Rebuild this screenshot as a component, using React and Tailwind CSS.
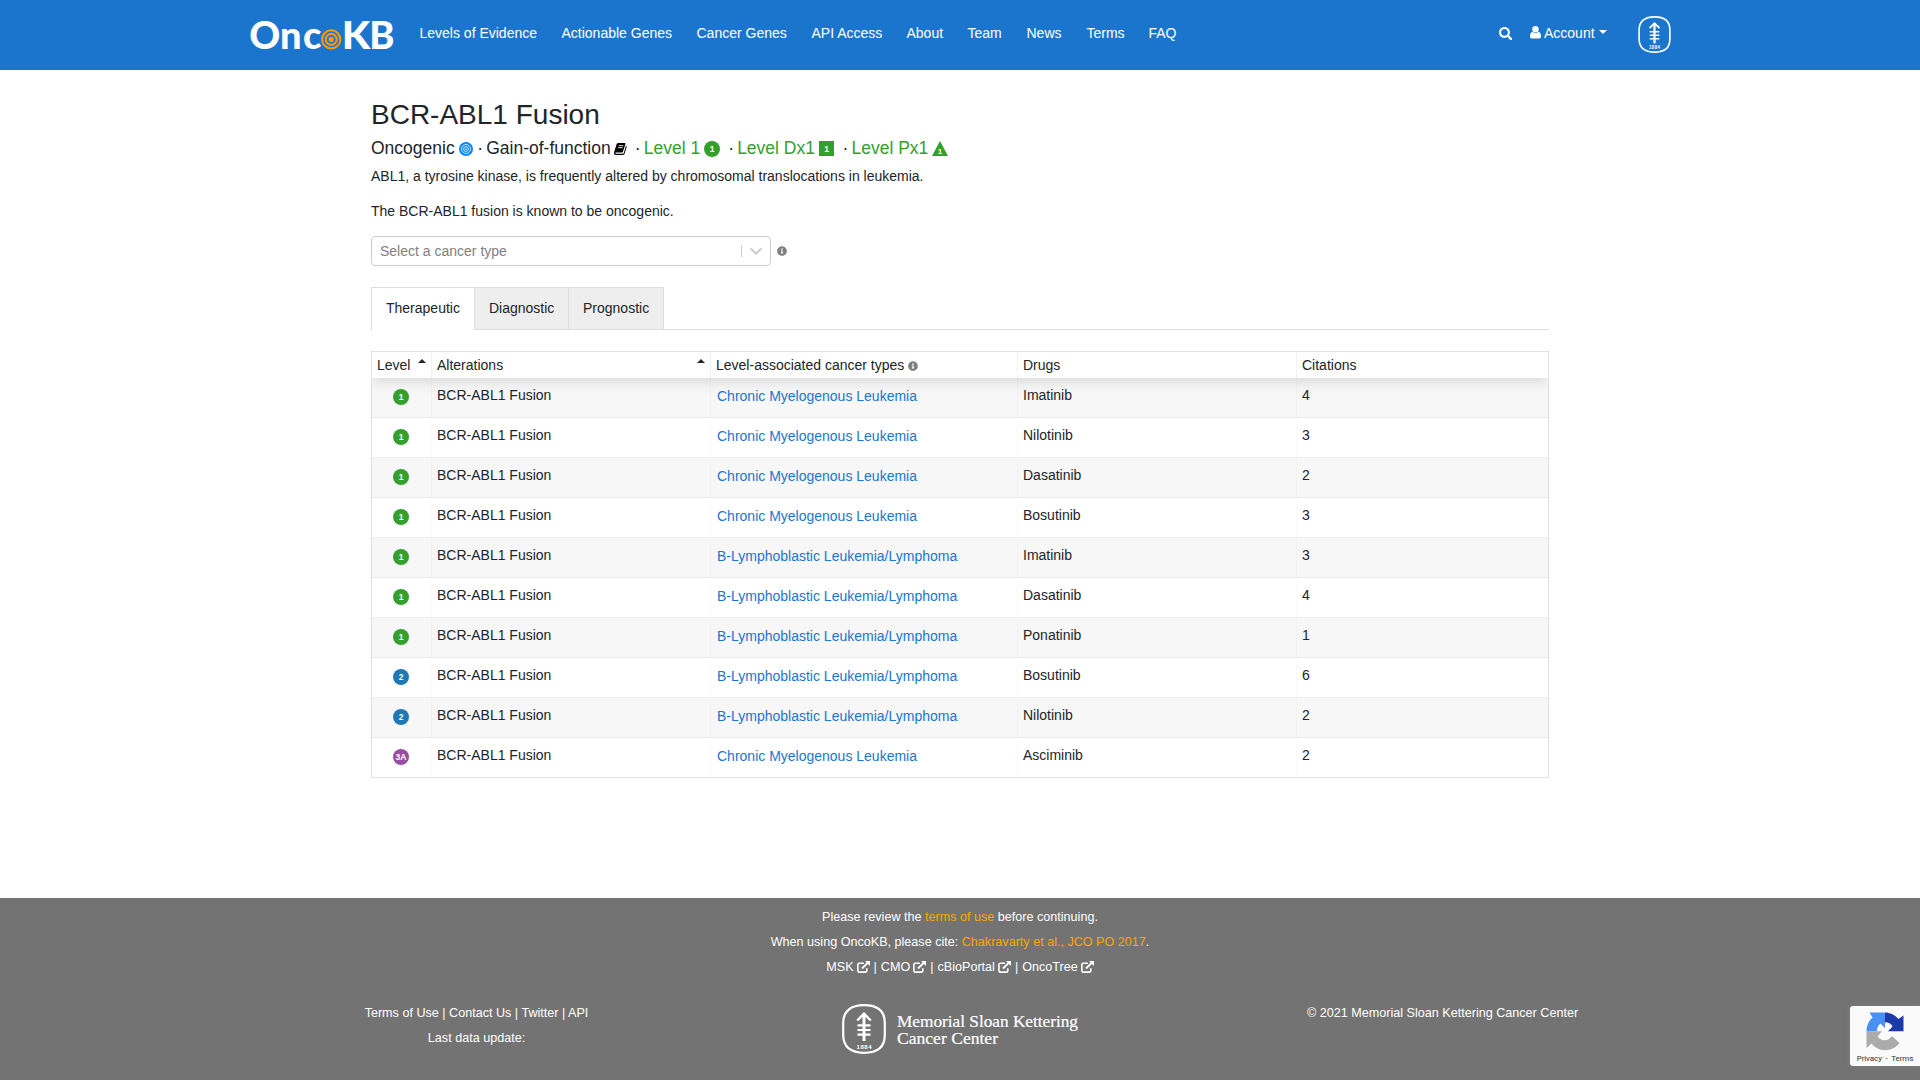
import React from "react";
import { FaInfoCircle, FaSearch } from "react-icons/fa";

const NAV = [
  ["Levels of Evidence", "w-[142px]"],
  ["Actionable Genes", "w-[135px]"],
  ["Cancer Genes", "w-[115px]"],
  ["API Access", "w-[95px]"],
  ["About", "w-[61px]"],
  ["Team", "w-[59px]"],
  ["News", "w-[60px]"],
  ["Terms", "w-[62px]"],
  ["FAQ", "w-[40px]"],
];

const CML = "Chronic Myelogenous Leukemia";
const BLL = "B-Lymphoblastic Leukemia/Lymphoma";

const ROWS = [
  ["1", CML, "Imatinib", 4],
  ["1", CML, "Nilotinib", 3],
  ["1", CML, "Dasatinib", 2],
  ["1", CML, "Bosutinib", 3],
  ["1", BLL, "Imatinib", 3],
  ["1", BLL, "Dasatinib", 4],
  ["1", BLL, "Ponatinib", 1],
  ["2", BLL, "Bosutinib", 6],
  ["2", BLL, "Nilotinib", 2],
  ["3A", CML, "Asciminib", 2],
];

const LEVEL_FILL = { 1: "#33a02c", 2: "#1f78b4", "3A": "#984ea3" };
const GRID = "grid grid-cols-[60px_279px_307px_279px_251px]";

function LevelBadge({ level, className = "" }) {
  return (
    <svg width="16" height="16" viewBox="0 0 16 16" className={"shrink-0 " + className}>
      <circle cx="8" cy="8" r="8" fill={LEVEL_FILL[level]} />
      <text x="8" y="11" textAnchor="middle" fontSize="8.5" fontWeight="700" fill="#fff">
        {level}
      </text>
    </svg>
  );
}

function OncoKbLogo() {
  return (
    <svg width="146" height="50" viewBox="0 0 146 50" fontFamily="Lato" fontWeight="900" fontSize="38" fill="#fff">
      <text x="0.2" y="38.5" textLength="31" lengthAdjust="spacingAndGlyphs">O</text>
      <text x="31" y="38.5">n</text>
      <text x="54" y="38.5">c</text>
      <text x="92.800" y="38.5" textLength="28.5" lengthAdjust="spacingAndGlyphs">K</text>
      <text x="120.200" y="38.5">B</text>
      <circle cx="82.2" cy="29.4" r="10" fill="#1c75cd" />
      <g fill="none" stroke="#ff9900" strokeWidth="2.1">
        <circle cx="82.2" cy="29.4" r="9.1" />
        <circle cx="82.2" cy="29.4" r="5.5" />
      </g>
      <circle cx="82.2" cy="29.4" r="2.6" fill="#ff9900" />
    </svg>
  );
}

function MskMark({ width, height }) {
  return (
    <svg width={width} height={height} viewBox="0 0 44 50" fill="none" stroke="#fff" className="shrink-0">
      <path
        d="M22 1.2C35 1.2 42.8 7 42.8 19V31C42.8 43 35 48.8 22 48.8S1.2 43 1.2 31V19C1.2 7 9 1.2 22 1.2Z"
        strokeWidth="2.2"
      />
      <path d="M22 9.5V37" strokeWidth="3" />
      <path d="M15.2 16.5L22 9.8L28.8 16.5" strokeWidth="2.4" />
      <path d="M15.5 21.3H28.5M15.5 26H28.5M15.5 30.7H28.5" strokeWidth="2.2" />
      <text x="22" y="44.5" textAnchor="middle" fontSize="6" fontWeight="700" fill="#fff" stroke="none" textLength="15">
        1884
      </text>
    </svg>
  );
}

function OncogenicIcon() {
  return (
    <svg width="14" height="14" viewBox="0 0 14 14" className="ml-[4px] mt-[2px]">
      <circle cx="7" cy="7" r="7" fill="#0a84ff" />
      <g fill="none" stroke="#fff" strokeWidth="0.8">
        <circle cx="7" cy="7" r="4.5" />
        <circle cx="7" cy="7" r="2.4" />
      </g>
      <circle cx="7" cy="7" r="0.8" fill="#fff" />
    </svg>
  );
}

function BookIcon() {
  return (
    <svg width="13" height="12" viewBox="0 0 13 12" className="ml-[3.5px] mt-[2px]">
      <path d="M4.200 0H10.700Q11.700 0 11.400 1L9 8.600Q8.700 9.500 7.800 9.500H2Q1.300 9.500 1.300 10.100T2 10.800H8.800Q9.500 10.800 9.800 10L12 2.600Q12.900 3 12.600 4L10.700 10.600Q10.300 12 9 12H1.600Q0 12 0 10.300Q0 9.500 .3 8.600L2.600 1.200Q3 0 4.200 0Z" fill="#000" />
      <path d="M4.800 2.700H9.300M4.200 4.700H8.700" stroke="#fff" strokeWidth="0.900" />
    </svg>
  );
}

function RecaptchaMark() {
  return (
    <svg width="38" height="39" viewBox="0 0 38 39">
      <path d="M19 .5V16L14.500 11.500C12 13.500 11 16 10.800 19.200H.5C.5 13.500 3 8.500 6.500 5.500L3.500 .5Z" fill="#4a90f2" />
      <path d="M19 .5C24.500 .5 29.500 3.500 32.500 7L37.500 3.500V19.200H22L26.500 14.500C25 11.500 22.500 10.300 19 10.300Z" fill="#1c3aa9" />
      <path d="M.5 19.200H16L11.500 24.500C15 29.500 22.500 29.500 26 24L33.500 31C26 40.500 12.500 40.500 5.500 31.500L.5 36Z" fill="#ababab" />
    </svg>
  );
}

function SortUp({ className }) {
  return (
    <svg width="8" height="4" viewBox="0 0 8 4" className={className}>
      <path d="M4 0L8 4H0Z" fill="#212529" />
    </svg>
  );
}

function Dot({ className = "w-[16.5px] pl-[7.5px]" }) {
  return <span className={"shrink-0 overflow-visible " + className}>·</span>;
}

function ExternalIcon() {
  return (
    <svg width="13" height="12" viewBox="0 0 13 12" className="ml-[3px] mr-[4px] mt-[-2px]" fill="none" stroke="#fff">
      <path d="M7 2.200H2.300Q.9 2.200 .9 3.600V9.700Q.9 11.100 2.300 11.100H8.400Q9.800 11.100 9.800 9.700V7.200" strokeWidth="1.600" />
      <path d="M5 7.500L11 1.600" strokeWidth="2" />
      <path d="M8 0H13V5Z" fill="#fff" stroke="none" />
    </svg>
  );
}

export default function App() {
  return (
    <div className="flex h-[1080px] w-[1920px] flex-col overflow-hidden bg-white text-[14px] leading-[20px] text-[#212529] [font-family:'Liberation_Sans',Arial,sans-serif]">
      <header className="flex h-[70px] shrink-0 items-center bg-[#1c75cd] pl-[249px] text-white">
        <OncoKbLogo />
        <nav className="mb-[5px] ml-[24.5px] flex">
          {NAV.map(([label, width]) => (
            <a key={label} className={"whitespace-nowrap " + width}>{label}</a>
          ))}
        </nav>
        <FaSearch className="mb-[3px] ml-[310px] text-[13.500px]" />
        <div className="mb-[5px] ml-[18px] flex items-center">
          <svg width="11" height="13" viewBox="0 0 11 13" fill="#fff">
            <circle cx="5.5" cy="3.300" r="3.200" />
            <path d="M2.500 5.800C.8 6 0 8 0 10.500Q0 12.500 1.800 12.500H9.200Q11 12.500 11 10.500C11 8 10.200 6 8.500 5.800Q5.500 8.400 2.500 5.800Z" />
          </svg>
          <span className="ml-[3px]">Account</span>
          <svg width="8" height="4" viewBox="0 0 8 4" className="mb-[2px] ml-[4px]" fill="#fff">
            <path d="M0 0H8L4 4Z" />
          </svg>
        </div>
        <div className="mb-[2px] ml-[31.5px]"><MskMark width="33" height="37" /></div>
      </header>

      <main className="ml-[371px] w-[1178px] grow">
        <h1 className="mt-[28px] text-[28px] leading-[34px]">BCR-ABL1 Fusion</h1>
        <div className="mt-[5px] flex h-[22px] items-center whitespace-pre text-[17.5px] leading-[22px]">
          <span>Oncogenic</span>
          <OncogenicIcon />
          <Dot className="w-[13.5px] pl-[4.5px]" />
          <span>Gain-of-function</span>
          <BookIcon />
          <Dot />
          <span className="text-[#33a02c]">Level 1</span>
          <LevelBadge level="1" className="ml-[4px] mr-[0.5px] mt-[2px]" />
          <Dot />
          <span className="text-[#33a02c]">Level Dx1</span>
          <svg width="15" height="15" viewBox="0 0 15 15" className="ml-[4.5px] mr-[0.5px] mt-[1px]">
            <path d="M0 0H15V15H0Z" fill="#33a02c" />
            <text x="7.500" y="10.500" textAnchor="middle" fontSize="8.500" fontWeight="700" fill="#fff">1</text>
          </svg>
          <Dot />
          <span className="text-[#33a02c]">Level Px1</span>
          <svg width="16" height="15" viewBox="0 0 16 15" className="ml-[4px] mt-[1px]">
            <path d="M8 0L16 15H0Z" fill="#33a02c" />
            <text x="8" y="12.500" textAnchor="middle" fontSize="8" fontWeight="700" fill="#fff">1</text>
          </svg>
        </div>
        <p className="mt-[7px]">ABL1, a tyrosine kinase, is frequently altered by chromosomal translocations in leukemia.</p>
        <p className="mt-[15px]">The BCR-ABL1 fusion is known to be oncogenic.</p>

        <div className="mt-[15px] flex items-center">
          <div className="flex h-[30px] w-[400px] items-center rounded-[4px] border border-[#ccc] pl-[8px]">
            <span className="grow text-[#808080]">Select a cancer type</span>
            <span className="h-[12px] w-px bg-[#ccc]" />
            <svg width="12" height="7" viewBox="0 0 12 7" className="ml-[8px] mr-[8px]" fill="none" stroke="#ccc" strokeWidth="2" strokeLinecap="round">
              <path d="M1.200 1L6 5.600L10.800 1" />
            </svg>
          </div>
          <FaInfoCircle className="ml-[6px] text-[10px] text-[#808080]" />
        </div>

        <div className="mt-[21px] flex h-[43px] border-b border-[#ddd] leading-[41px]">
          <div className="h-[43px] w-[104px] border border-b-0 border-[#ddd] bg-white pl-[14px]">Therapeutic</div>
          <div className="w-[94px] border-r border-t border-[#ddd] bg-[#eee] pl-[14px]">Diagnostic</div>
          <div className="w-[95px] border-r border-t border-[#ddd] bg-[#eee] pl-[14px]">Prognostic</div>
        </div>

        <div className="mt-[21px] h-[427px] border border-[#e1e1e1]">
          <div className={GRID + " relative h-[26px] leading-[26px] shadow-[0_2px_15px_0_rgba(0,0,0,0.15)] [clip-path:inset(0_0_-24px_0)]"}>
            <div className="flex border-r border-black/5 pl-[5px]">
              Level
              <SortUp className="ml-[7.5px] mt-[7px]" />
            </div>
            <div className="flex justify-between border-r border-black/5 pl-[5px] pr-[5px]">
              Alterations
              <SortUp className="mt-[7px]" />
            </div>
            <div className="flex items-center border-r border-black/5 pl-[5px]">
              Level-associated cancer types
              <FaInfoCircle className="ml-[4px] mt-[2px] text-[10px] text-[#808080]" />
            </div>
            <div className="border-r border-black/5 pl-[5px]">Drugs</div>
            <div className="pl-[5px]">Citations</div>
          </div>
          {ROWS.map(([level, cancer, drug, citations], i) => (
            <div
              key={i}
              className={GRID + " h-[40px] border-b border-black/5 leading-[34px] last:h-[39px] last:border-b-0 " + (i % 2 === 0 ? "bg-black/[0.03]" : "")}
            >
              <div className="border-r border-black/[0.02] pl-[21px] pt-[11px]"><LevelBadge level={level} /></div>
              <div className="border-r border-black/[0.02] pl-[5px]">BCR-ABL1 Fusion</div>
              <div className="border-r border-black/[0.02] pl-[6px] pt-[1px] text-[#1c75cd]">{cancer}</div>
              <div className="border-r border-black/[0.02] pl-[5px]">{drug}</div>
              <div className="pl-[5px]">{citations}</div>
            </div>
          ))}
        </div>
      </main>

      <footer className="relative h-[182px] shrink-0 bg-[#737373] pt-[7px] text-[12.6px] leading-[25px] text-white">
        <div className="flex flex-col items-center">
          <p>Please review the <a className="text-[#ffa500]">terms of use</a> before continuing.</p>
          <p>When using OncoKB, please cite: <a className="text-[#ffa500]">Chakravarty et al., JCO PO 2017</a>.</p>
          <div className="flex items-center pl-[4px]">
            MSK<ExternalIcon />
            <span className="mr-[4px]">|</span>CMO<ExternalIcon />
            <span className="mr-[4px]">|</span>cBioPortal<ExternalIcon />
            <span className="mr-[4px]">|</span>OncoTree<ExternalIcon />
          </div>
        </div>
        <div className="mt-[21px] flex items-start">
          <div className="ml-[363px] w-[227px] text-center whitespace-nowrap">
            <p>Terms of Use | Contact Us | Twitter | API</p>
            <p>Last data update:</p>
          </div>
          <div className="ml-[252px] mt-[3px] flex">
            <MskMark width="44" height="50" />
            <svg width="184" height="50" viewBox="0 0 184 50" className="ml-[11px]" fill="#fff" stroke="#fff" strokeWidth="0.200" fontFamily="Liberation Serif" fontSize="17">
              <text x="0" y="22.500" textLength="181" lengthAdjust="spacingAndGlyphs">Memorial Sloan Kettering</text>
              <text x="0" y="39.500" textLength="101" lengthAdjust="spacingAndGlyphs">Cancer Center</text>
            </svg>
          </div>
          <p className="ml-[226px] whitespace-nowrap">© 2021 Memorial Sloan Kettering Cancer Center</p>
        </div>
        <div className="absolute bottom-[14px] right-0 flex h-[60px] w-[70px] flex-col items-center rounded-l-[3px] bg-[#fafafa] pt-[6px] shadow-[0_0_5px_rgba(128,128,128,1)]">
          <RecaptchaMark />
          <span className="mt-[1px] whitespace-nowrap text-[8px] leading-[14px] tracking-[-0.1px] text-[#333] [font-family:Roboto,sans-serif]">Privacy&nbsp; -&nbsp; Terms</span>
        </div>
      </footer>
    </div>
  );
}
